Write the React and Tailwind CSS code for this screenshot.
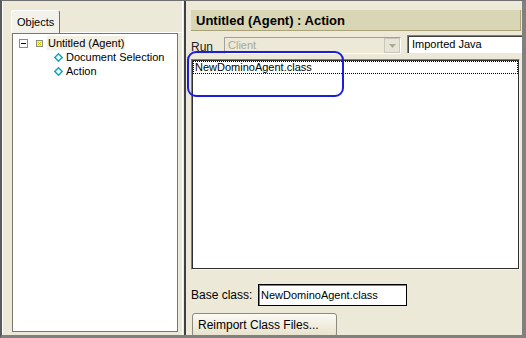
import React from "react";

function ExpandBox() {
  return (
    <svg width="9" height="9" viewBox="0 0 9 9" className="block">
      <rect x="0.5" y="0.5" width="8" height="8" fill="#fff" stroke="#8a8a8a" />
      <line x1="2" y1="4.5" x2="7" y2="4.5" stroke="#000" />
    </svg>
  );
}

function AgentIcon() {
  return (
    <svg width="7" height="7" viewBox="0 0 7 7" className="block">
      <rect x="0.5" y="0.5" width="6" height="6" fill="#f4f090" stroke="#8c8c80" />
      <rect x="2" y="2" width="1" height="1" fill="#c8c000" />
      <rect x="4" y="2" width="1" height="1" fill="#c8c000" />
      <rect x="3" y="3" width="1" height="1" fill="#c8c000" />
      <rect x="2" y="4" width="1" height="1" fill="#c8c000" />
      <rect x="4" y="4" width="1" height="1" fill="#c8c000" />
    </svg>
  );
}

function Diamond() {
  return (
    <svg width="9" height="9" viewBox="0 0 9 9" className="block">
      <polygon
        points="4.5,0.8 8.2,4.5 4.5,8.2 0.8,4.5"
        fill="#fff"
        stroke="#0aa6b8"
        strokeWidth="1.4"
      />
    </svg>
  );
}

export default function App() {
  return (
    <div className="w-[526px] h-[338px] overflow-hidden bg-[#ECE9D8] font-['Liberation_Sans',Arial,sans-serif] text-[11px] leading-none text-black">
      <div className="flex h-full border-t border-l-2 border-r-4 border-b-[3px] border-t-[#6f6f6f] border-l-[#5a5a5a] border-r-[#808080] border-b-[#808080]">
        {/* left pane */}
        <div className="w-[180px] shrink-0 pl-[8px] pt-[9px] border-l border-l-white">
          <div className="flex h-[23px]">
            <div className="w-[49px] h-[23px] shrink-0 border-l border-t border-white border-r border-r-[#716f64] rounded-t-[3px] bg-[#f3f2ea] pl-[5px] pt-[6px] text-[11px]">
              Objects
            </div>
            <div className="flex-1 border-b border-white" />
          </div>
          <div className="ml-[1px] w-[166px] h-[299px] border border-[#7a786c] bg-white pt-[2px]">
            <div className="flex items-center h-[14px] pl-[6px]">
              <ExpandBox />
              <div className="ml-[8px]">
                <AgentIcon />
              </div>
              <span className="ml-[4px] px-[1px] h-[14px] flex items-center bg-[#f3f1e4] text-[11px]">
                Untitled (Agent)
              </span>
            </div>
            <div className="flex items-center h-[14px] pl-[41px]">
              <Diamond />
              <span className="ml-[3px] text-[11px]">Document Selection</span>
            </div>
            <div className="flex items-center h-[14px] pl-[41px]">
              <Diamond />
              <span className="ml-[3px] text-[11px]">Action</span>
            </div>
          </div>
        </div>

        {/* splitter */}
        <div className="w-[4px] shrink-0 border-l border-l-white border-r-2 border-r-[#404040]" />

        {/* right pane */}
        <div className="relative flex-1 overflow-hidden pl-[5px] pt-[9px] flex flex-col">
          <div className="mr-[1px] h-[21px] shrink-0 bg-[#d9d6b5] border-r border-b border-[#aaa37a] pl-[5px] flex items-center font-bold text-[13px]">
            Untitled (Agent) : Action
          </div>

          <div className="mt-[4px] h-[19px] shrink-0 flex items-start">
            <span className="w-[33px] shrink-0 pt-[6px] text-[12px] text-[#222]">Run</span>
            <div className="mt-[2px] w-[177px] h-[17px] shrink-0 border-t border-l border-[#a0a0a0] border-r border-b border-r-white border-b-white bg-[#ECE9D8] flex items-center justify-between">
              <span className="pl-[3px] text-[#a9a899] text-[11px]">Client</span>
              <div className="w-[16px] h-[15px] bg-[#e7e5d8] border border-[#c9c7b9] flex items-center justify-center">
                <svg width="7" height="4" viewBox="0 0 7 4">
                  <polygon points="0,0 7,0 3.5,4" fill="#aca899" />
                </svg>
              </div>
            </div>
            <div className="ml-[6px] w-[140px] h-[18px] shrink-0 border-t border-l border-[#808080] bg-white shadow-[inset_1px_1px_0_#404040] pl-[4px] flex items-center text-[11px]">
              Imported Java
            </div>
          </div>

          <div className="mt-[5px] mr-[2px] h-[211px] shrink-0 border border-t-[#808080] border-l-[#808080] border-r-[#f4f4f4] border-b-[#f4f4f4] shadow-[inset_1px_1px_0_#303030,inset_-1px_-1px_0_#303030] bg-white p-[1px]">
            <div className="h-[13px] border border-dotted border-black flex items-center pl-[1px] text-[11px]">
              NewDominoAgent.class
            </div>
          </div>

          <div className="mt-[14px] h-[22px] shrink-0 flex items-center">
            <span className="w-[67px] shrink-0 text-[12px]">Base class:</span>
            <div className="w-[149px] h-[22px] shrink-0 border border-black bg-white shadow-[inset_1px_1px_0_#808080] pl-[2px] flex items-center text-[11px]">
              NewDominoAgent.class
            </div>
          </div>

          <div className="mt-[7px] ml-[1px] w-[145px] h-[24px] shrink-0 rounded-[3px] border border-[#8c8a7c] bg-gradient-to-b from-[#fbfaf4] to-[#e6e2cc] pl-[5px] flex items-center text-[12px]">
            Reimport Class Files...
          </div>

          <div className="absolute left-[1px] top-[50px] w-[157px] h-[46px] rounded-[9px] border-2 border-[#1c1cdf]" />
        </div>
      </div>
    </div>
  );
}
